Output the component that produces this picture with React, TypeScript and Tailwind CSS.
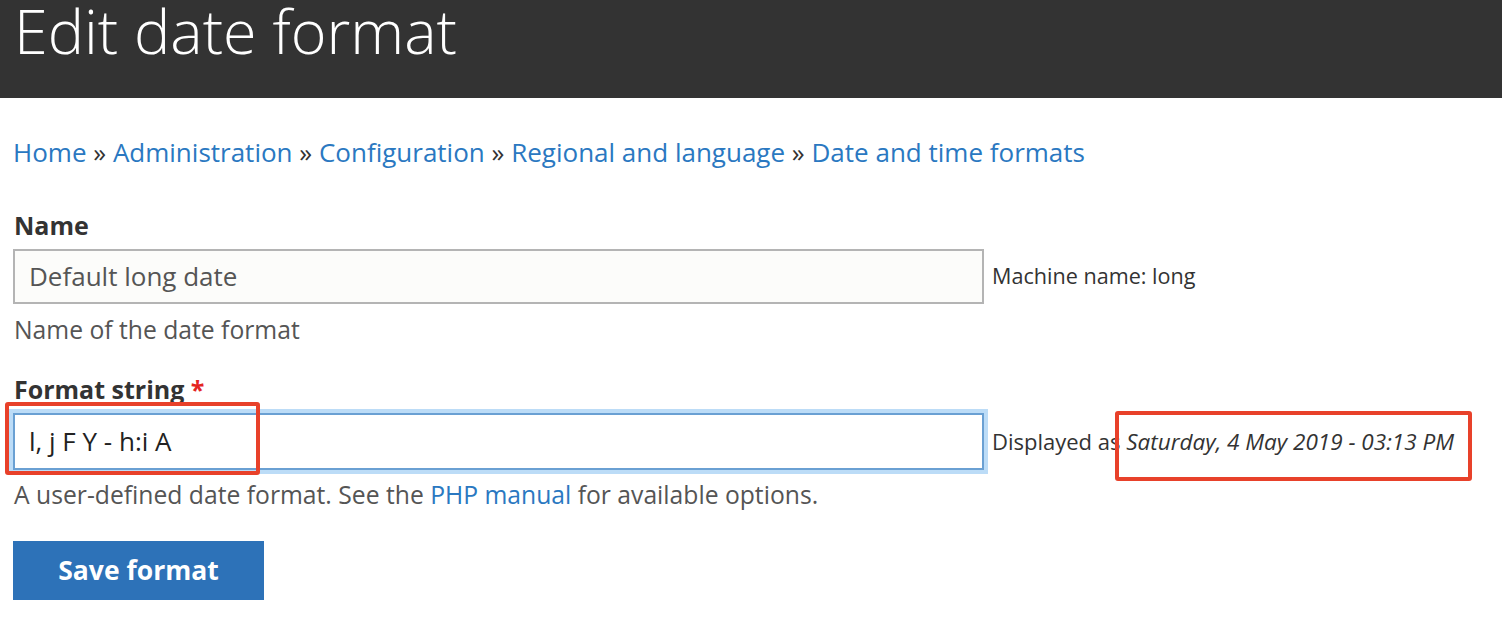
import React from "react";

const crumbs = [
  "Home",
  "Administration",
  "Configuration",
  "Regional and language",
  "Date and time formats",
];

export default function App() {
  return (
    <div
      className="relative min-h-[636px] bg-white text-[#333]"
      style={{ fontFamily: '"Open Sans", "Noto Sans", sans-serif' }}
    >
      <header className="h-[98px] bg-[#333] pl-[14px]">
        <h1 className="text-[61px] font-light leading-[61px] text-white">Edit date format</h1>
      </header>

      <div className="px-[13px]">
        <nav className="mt-[37px] text-[26px] leading-[34px]">
          {crumbs.map((c, i) => (
            <span key={c}>
              {i > 0 && <span className="text-[#333]"> » </span>}
              <a className="text-[#2a78c1]">{c}</a>
            </span>
          ))}
        </nav>

        <div className="mt-[39px]">
          <label className="block pl-px text-[25px] font-bold leading-[34px]">Name</label>
          <div className="mt-[7px] flex items-center">
            <div className="flex h-[55px] w-[971px] items-center border-2 border-[#b4b4b4] bg-[#fcfcfa] pl-[14px] text-[26px] text-[#555]">
              Default long date
            </div>
            <span className="ml-[8px] text-[21.6px] text-[#333]">Machine name: long</span>
          </div>
          <p className="mt-[9px] pl-px text-[24.7px] leading-[34px] text-[#555]">
            Name of the date format
          </p>
        </div>

        <div className="mt-[25px]">
          <label className="block pl-px text-[25px] font-bold leading-[34px]">
            Format string <span className="text-[#e4261f]">*</span>
          </label>
          <div className="mt-[7px] flex items-center">
            <div className="flex h-[57px] w-[971px] items-center border-2 border-[#6aa0d3] bg-white pl-[14px] text-[26px] text-[#222] shadow-[0_0_0_4px_#bcdcf7]">
              l, j F Y - h:i A
            </div>
            <span className="ml-[8px] text-[22px] text-[#333]">
              Displayed as <em className="text-[22.5px] italic">Saturday, 4 May 2019 - 03:13 PM</em>
            </span>
          </div>
          <p className="mt-[8px] pl-px text-[24.7px] leading-[34px] text-[#555]">
            A user-defined date format. See the <a className="text-[#2a78c1]">PHP manual</a> for
            available options.
          </p>
        </div>

        <button className="mt-[29px] h-[59px] w-[251px] bg-[#2d72b8] text-[26.5px] font-bold text-white">
          Save format
        </button>
      </div>

      <div className="pointer-events-none absolute left-[5px] top-[402px] h-[73px] w-[255px] rounded-[3px] border-[4px] border-[#e8412a]" />
      <div className="pointer-events-none absolute left-[1115px] top-[411px] h-[70px] w-[357px] rounded-[3px] border-[4px] border-[#e8412a]" />
    </div>
  );
}
